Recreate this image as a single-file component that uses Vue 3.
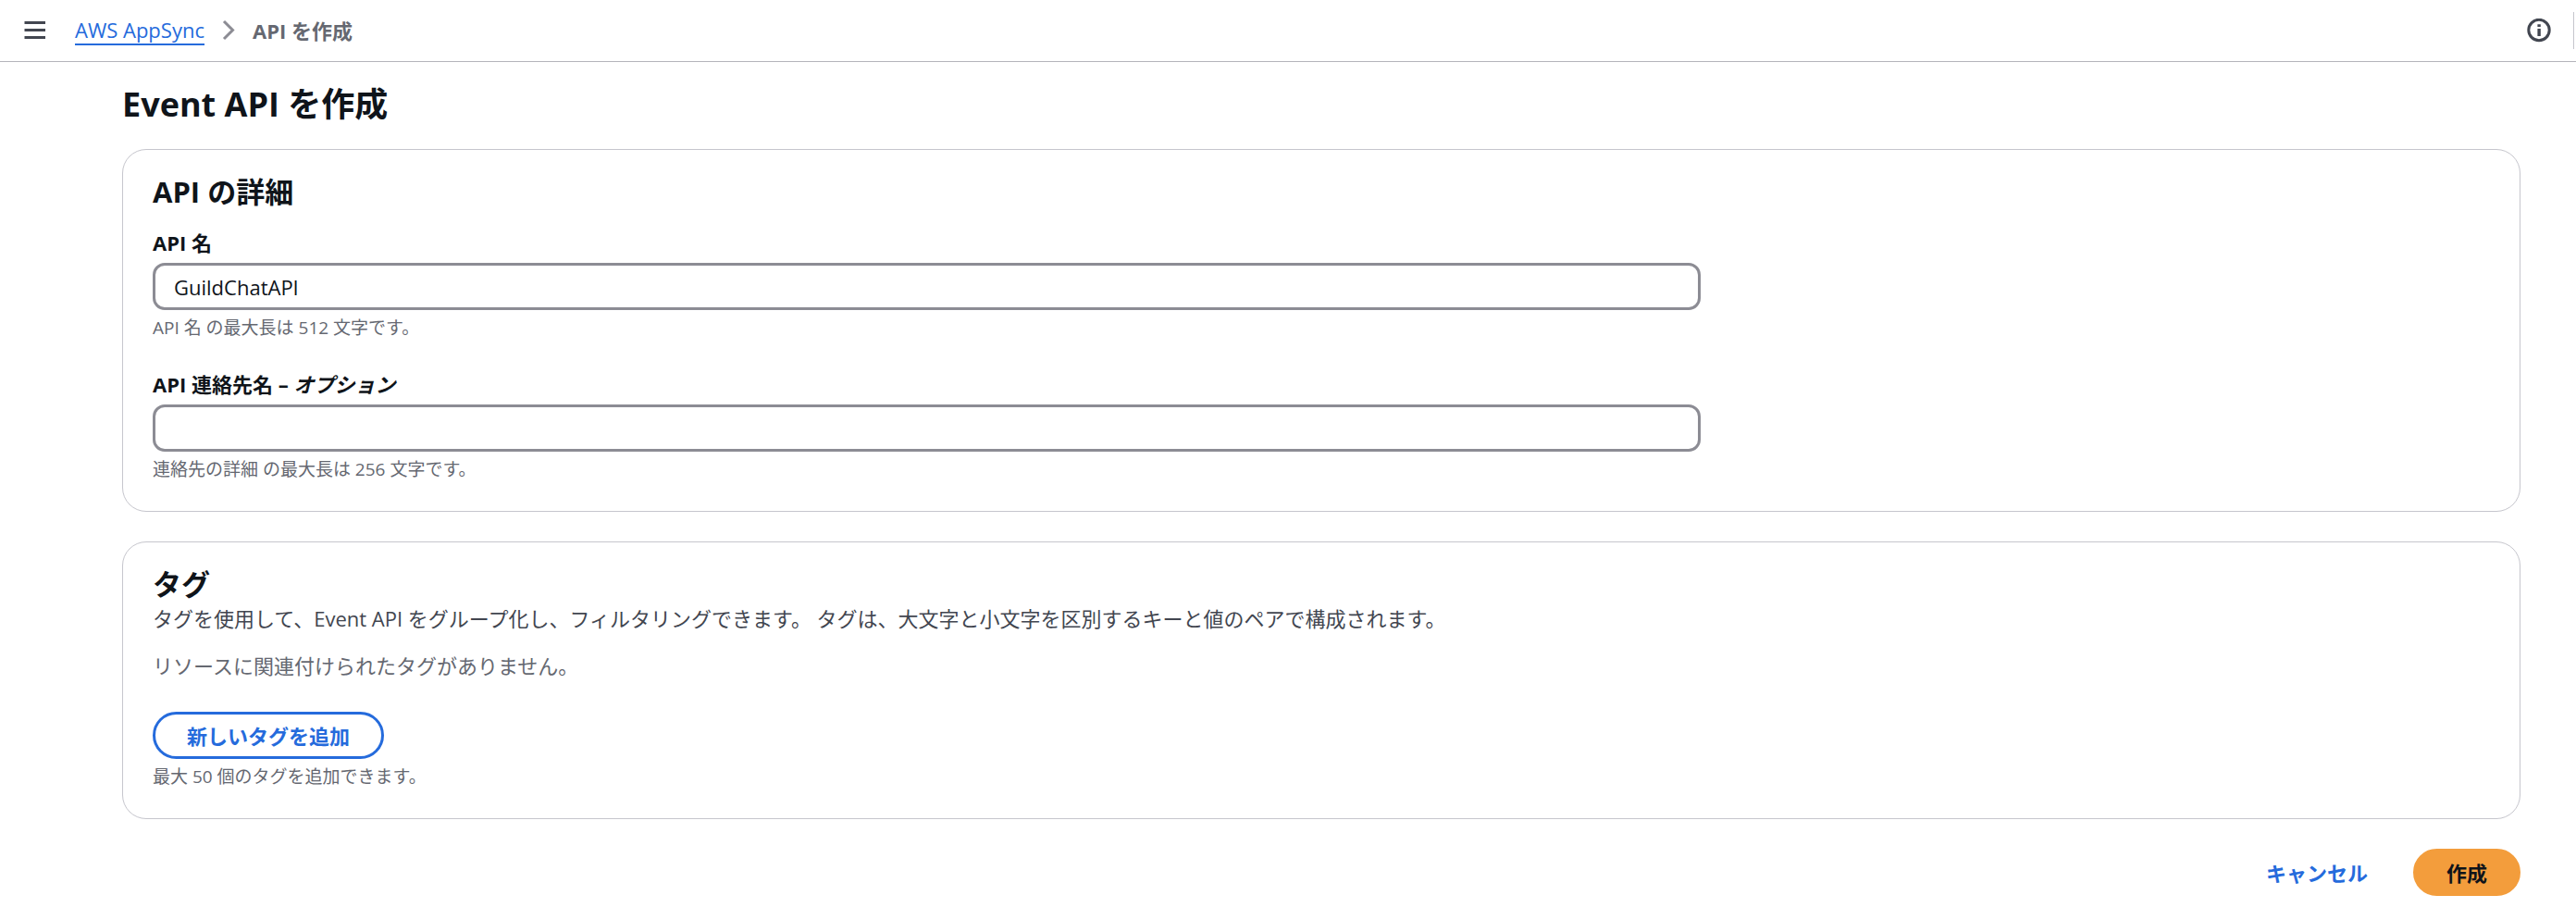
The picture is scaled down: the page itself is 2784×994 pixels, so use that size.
<template>
  <div class="app">
    <header class="top-bar">
      <button type="button" class="icon-button" aria-label="ナビゲーションを開く">
        <svg width="24" height="24" viewBox="0 0 24 24" fill="none" stroke="currentColor" stroke-width="3">
          <path d="M0.5 3.5h22.5M0.5 11.5h22.5M0.5 19.5h22.5" />
        </svg>
      </button>

      <nav class="breadcrumbs" aria-label="パンくずリスト">
        <a href="#" class="breadcrumb-link">AWS AppSync</a>
        <svg class="chevron" width="14" height="24" viewBox="0 0 14 24" fill="none" stroke="currentColor" stroke-width="3">
          <path d="M2 2L11.5 11.5L2 21" />
        </svg>
        <span class="breadcrumb-current">API を作成</span>
      </nav>

      <div class="tools">
        <button type="button" class="icon-button" aria-label="情報">
          <svg width="26" height="26" viewBox="0 0 26 26" fill="none">
            <circle cx="13" cy="12.5" r="11.2" stroke="currentColor" stroke-width="3" />
            <path d="M11.4 6.2h3.4v2.8h-3.4zM11.4 11h3.4v8h-3.4z" fill="currentColor" />
          </svg>
        </button>
        <span class="tools-divider"></span>
      </div>
    </header>

    <main class="content">
      <h1>Event API を作成</h1>

      <form @submit.prevent>
        <section class="card">
          <h2>API の詳細</h2>
          <div class="fields">
            <div v-for="field in fields" :key="field.id" class="field">
              <label :for="field.id">
                {{ field.label }}<template v-if="field.optional"> – <i>オプション</i></template>
              </label>
              <input :id="field.id" v-model="field.value" type="text" :aria-describedby="field.id + '-hint'" />
              <p :id="field.id + '-hint'" class="hint">{{ field.hint }}</p>
            </div>
          </div>
        </section>

        <section class="card">
          <h2>タグ</h2>
          <p class="description">
            タグを使用して、Event API をグループ化し、フィルタリングできます。 タグは、大文字と小文字を区別するキーと値のペアで構成されます。
          </p>
          <p class="empty">リソースに関連付けられたタグがありません。</p>
          <button type="button" class="btn btn-outline">新しいタグを追加</button>
          <p class="hint">最大 50 個のタグを追加できます。</p>
        </section>

        <div class="actions">
          <button type="button" class="btn btn-link">キャンセル</button>
          <button type="submit" class="btn btn-primary">作成</button>
        </div>
      </form>
    </main>
  </div>
</template>

<script setup>
import { ref } from 'vue';

const fields = ref([
  {
    id: 'api-name',
    label: 'API 名',
    optional: false,
    value: 'GuildChatAPI',
    hint: 'API 名 の最大長は 512 文字です。'
  },
  {
    id: 'owner-contact',
    label: 'API 連絡先名',
    optional: true,
    value: '',
    hint: '連絡先の詳細 の最大長は 256 文字です。'
  }
]);
</script>

<style>
body {
  background: #fff;
}
</style>

<style scoped>
.app {
  color: #0f141a;
  font-family: "Open Sans", "Noto Sans CJK JP", sans-serif;
  font-size: 22px;
  line-height: 33px;
}

.app *,
.app *::before,
.app *::after {
  box-sizing: border-box;
}

h1,
h2,
p {
  margin: 0;
}

button,
input {
  font: inherit;
}

.top-bar {
  display: flex;
  align-items: center;
  height: 67px;
  padding-left: 26px;
  border-bottom: 1px solid #b4b4bb;
}

.icon-button {
  display: flex;
  padding: 0;
  border: 0;
  background: none;
  color: #424650;
  cursor: pointer;
}

.breadcrumbs {
  display: flex;
  align-items: center;
  gap: 19px;
  margin-left: 31px;
}

.breadcrumb-link {
  color: #256bdc;
  line-height: 30px;
  text-decoration: none;
  border-bottom: 2px solid currentColor;
}

.chevron {
  color: #8c8c94;
}

.breadcrumb-current {
  color: #656871;
  font-weight: 700;
  line-height: 32px;
}

.tools {
  display: flex;
  align-items: center;
  gap: 24px;
  margin-left: auto;
  padding-right: 2px;
}

.tools-divider {
  width: 1px;
  height: 40px;
  background: #c6c6cd;
}

.content {
  padding: 24px 60px 26px 132px;
}

h1 {
  margin-bottom: 26px;
  font-size: 36px;
  line-height: 44px;
  font-weight: 700;
}

h2 {
  font-size: 31px;
  line-height: 36px;
  font-weight: 700;
}

.card {
  margin-bottom: 32px;
  padding: 27px 32px 32px;
  border: 1px solid #c6c6cd;
  border-radius: 26px;
}

.fields {
  display: grid;
  grid-template-columns: repeat(3, 1fr);
  gap: 32px;
  margin-top: 21px;
}

.field {
  grid-column: 1 / span 2;
}

.field label {
  display: block;
  font-weight: 700;
  line-height: 32px;
}

.field input {
  display: block;
  width: 100%;
  height: 51px;
  margin-top: 6px;
  padding: 0 20px;
  border: 3px solid #8c8c94;
  border-radius: 13px;
  background: #fff;
  color: #0f141a;
}

.hint {
  margin-top: 6px;
  color: #656871;
  font-size: 19px;
  line-height: 26px;
}

.description {
  margin-top: 3px;
  color: #424650;
}

.empty {
  margin-top: 18px;
  margin-bottom: 33px;
  color: #656871;
}

.btn {
  height: 51px;
  padding: 0 33px;
  border: 3px solid transparent;
  border-radius: 26px;
  background: transparent;
  font-weight: 700;
  line-height: 32px;
  cursor: pointer;
}

.btn-outline {
  padding: 0 34px;
  border-color: #256bdc;
  color: #256bdc;
}

.btn-link {
  color: #256bdc;
}

.btn-primary {
  border-color: #f39d3c;
  background: #f39d3c;
  color: #0f141a;
}

.actions {
  display: flex;
  justify-content: flex-end;
  gap: 13px;
}
</style>
